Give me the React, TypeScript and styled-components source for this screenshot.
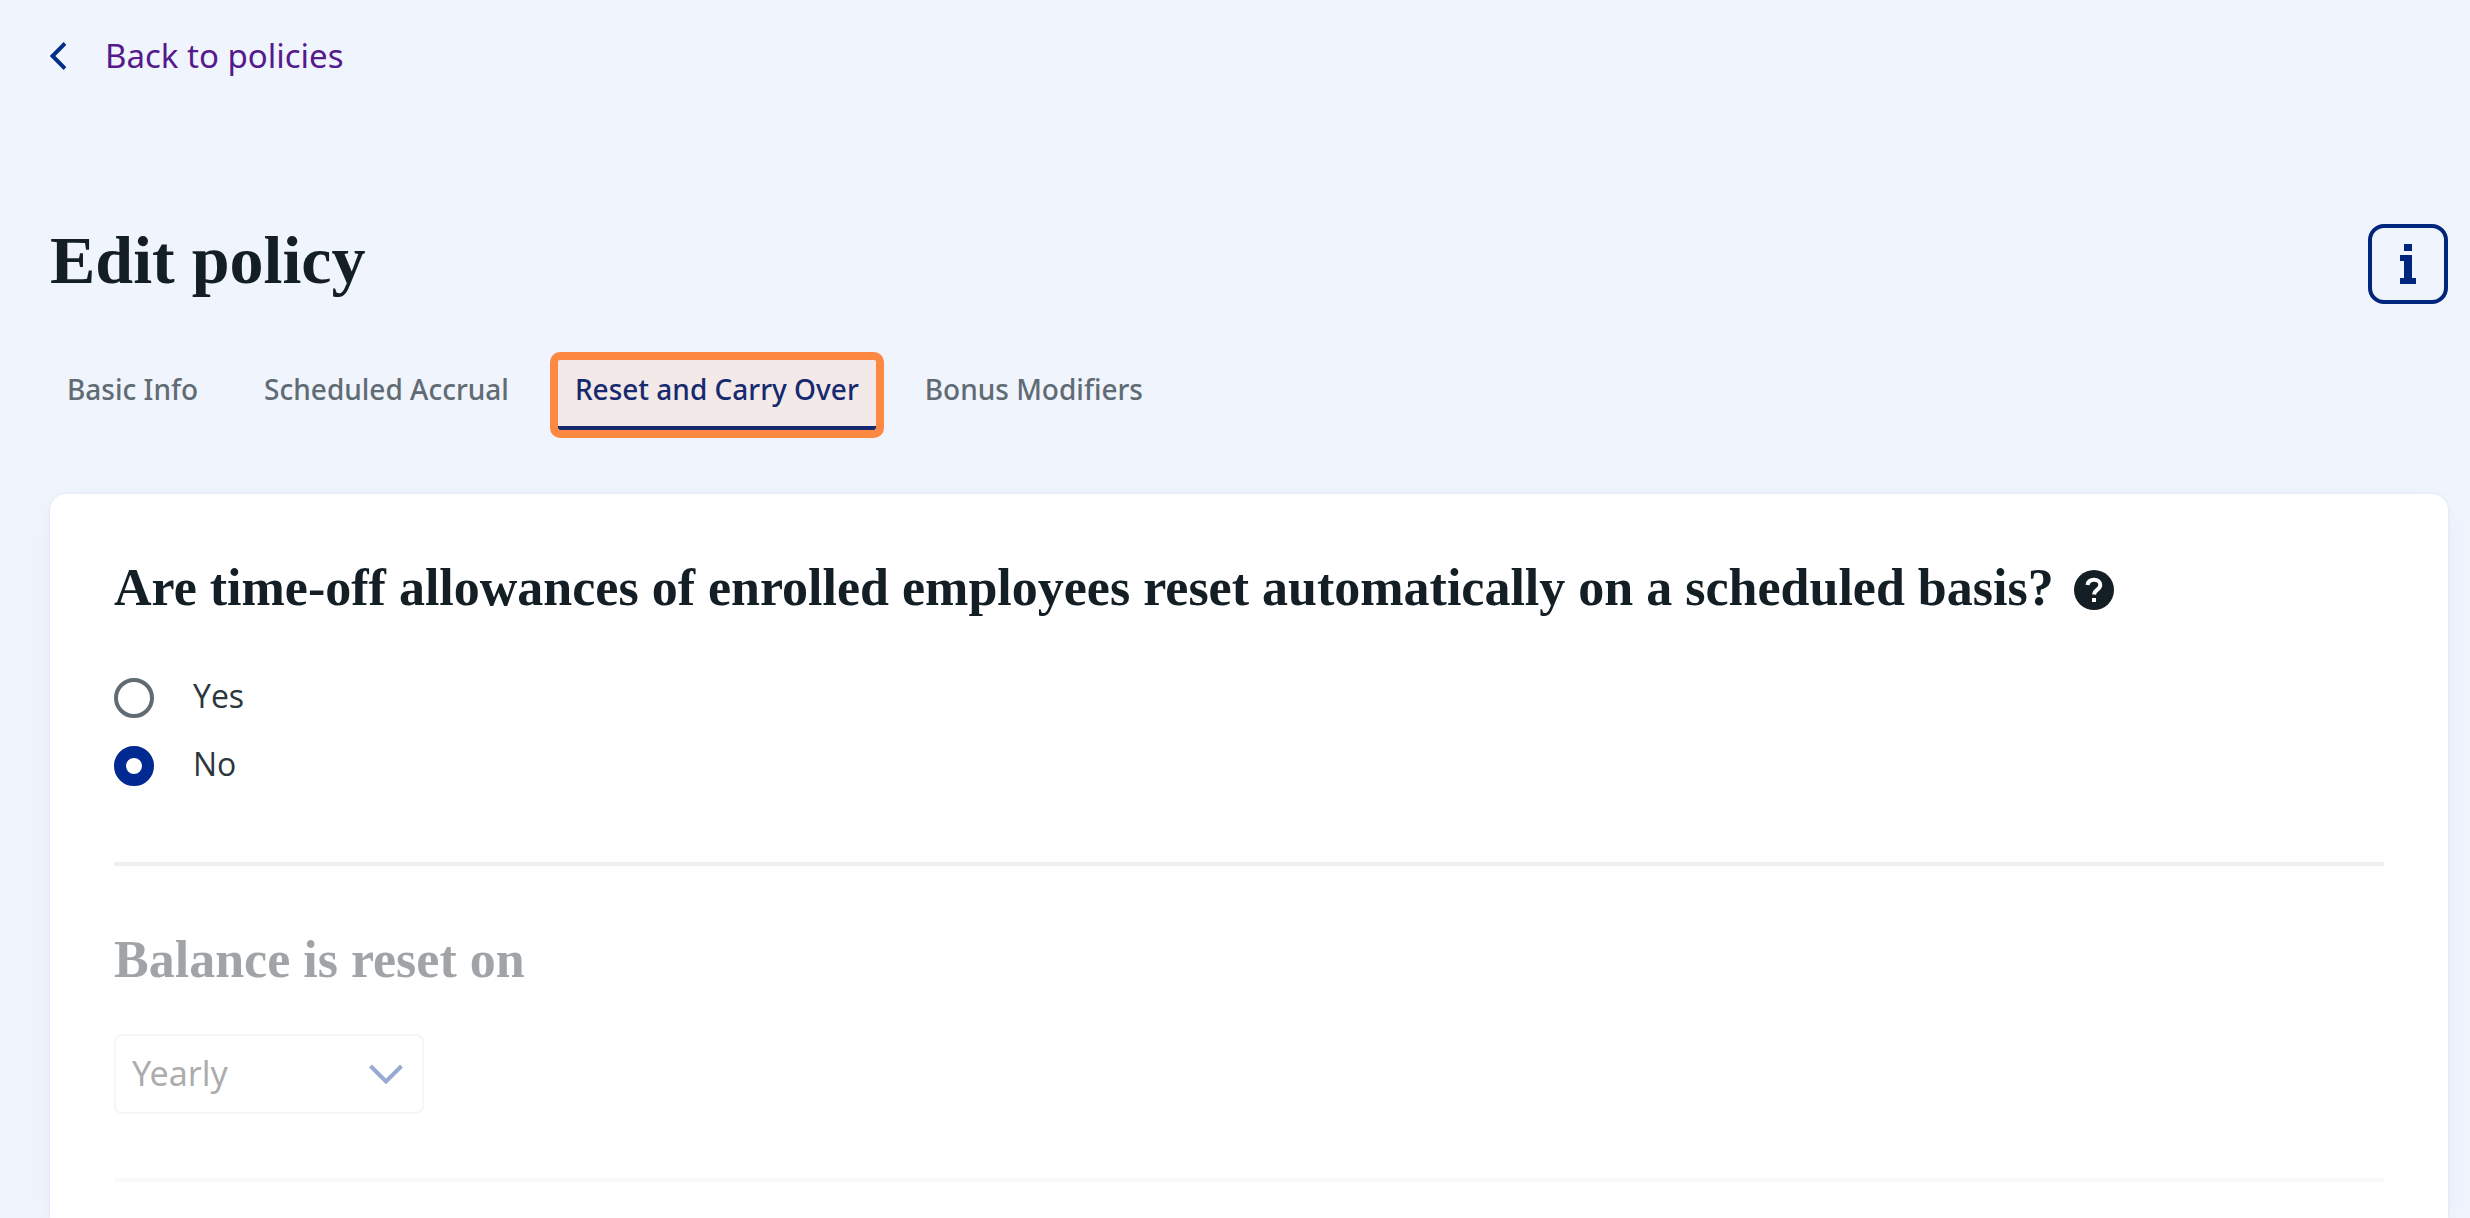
import React, { useState } from "react";
import styled, { createGlobalStyle } from "styled-components";

const color = {
  page: "#f0f4fc",
  ink: "#131e25",
  body: "#2c363d",
  muted: "#606b73",
  navy: "#00257c",
  tab: "#17296f",
  radio: "#002a91",
  visited: "#551a8b",
  highlight: "#fd8841",
  highlightFill: "#f2e9e8",
  rule: "#edeff2",
};

const sans = `"Open Sans", "Noto Sans", sans-serif`;
const serif = `"Source Serif Pro", "Liberation Serif", serif`;

const GlobalStyle = createGlobalStyle`
  *, *::before, *::after { box-sizing: border-box; }
  body {
    margin: 0;
    background: ${color.page};
    color: ${color.ink};
    font-family: ${sans};
  }
`;

const Page = styled.div`
  display: flex;
  flex-direction: column;
  min-height: 100vh;
  padding: 32px 22px 0 50px;
`;

const BackLink = styled.a`
  display: flex;
  align-items: center;
  align-self: flex-start;
  gap: 39px;
  height: 48px;
  color: ${color.visited};
  font-family: "Noto Sans", sans-serif;
  font-size: 33px;
  line-height: 48px;
  text-decoration: none;
`;

const Header = styled.header`
  display: flex;
  align-items: flex-start;
  justify-content: space-between;
  margin-top: 144px;
`;

const Title = styled.h1`
  margin: 0;
  font-family: ${serif};
  font-size: 68px;
  font-weight: 700;
  line-height: 72px;
`;

const InfoButton = styled.button`
  display: grid;
  place-items: center;
  width: 80px;
  height: 80px;
  padding: 0;
  border: 4px solid ${color.navy};
  border-radius: 16px;
  background: transparent;
  color: ${color.navy};
  cursor: pointer;
`;

const Tabs = styled.div`
  display: flex;
  gap: 32px;
  margin: 56px 0 64px;
`;

const Tab = styled.button<{ $active: boolean }>`
  height: 70px;
  padding: 0 17px 8px;
  border: 0;
  border-bottom: 4px solid ${(p) => (p.$active ? color.tab : "transparent")};
  border-radius: 2px;
  outline: ${(p) => (p.$active ? `8px solid ${color.highlight}` : "none")};
  background: ${(p) => (p.$active ? color.highlightFill : "transparent")};
  color: ${(p) => (p.$active ? color.tab : color.muted)};
  font-family: "Noto Sans", sans-serif;
  font-size: 28px;
  font-weight: 500;
  line-height: 40px;
  cursor: pointer;
`;

const Card = styled.main`
  flex: 1;
  padding: 64px 64px 36px;
  border-radius: 16px 16px 0 0;
  background: #fff;
  box-shadow: 0 0 3px rgba(40, 70, 160, 0.1), 0 8px 32px rgba(40, 70, 160, 0.03);
`;

const Section = styled.fieldset`
  min-width: 0;
  margin: 0;
  padding: 0 0 72px;
  border: 0;
  border-bottom: 4px solid ${color.rule};

  &:disabled {
    padding: 64px 0;
    border-color: #f9fafa;
  }
`;

const SectionHeading = styled.h2`
  display: flex;
  align-items: center;
  gap: 20px;
  margin: 0;
  font-family: ${serif};
  font-size: 52px;
  font-weight: 700;
  line-height: 60px;

  ${Section}:disabled & { opacity: 0.4; }
`;

const HelpButton = styled.button`
  display: flex;
  margin-top: 4px;
  padding: 0;
  border: 0;
  background: none;
  color: ${color.ink};
  cursor: pointer;
`;

const Options = styled.div`
  display: flex;
  flex-direction: column;
  gap: 20px;
  margin-top: 56px;
`;

const Option = styled.label`
  display: flex;
  align-items: center;
  gap: 39px;
  height: 48px;
  color: ${color.body};
  font-size: 32px;
  line-height: 44px;
`;

const OptionText = styled.span`
  padding-bottom: 4px;
`;

const Radio = styled.input`
  appearance: none;
  width: 40px;
  height: 40px;
  margin: 0;
  border: 4px solid ${color.muted};
  border-radius: 50%;
  background: #fff;

  &:checked { border: 12px solid ${color.radio}; }
`;

const SelectBox = styled.div`
  display: grid;
  align-items: center;
  width: 310px;
  margin-top: 44px;
  opacity: 0.4;

  > * { grid-area: 1 / 1; }
  > svg { justify-self: end; margin-right: 21px; pointer-events: none; }
`;

const Select = styled.select`
  appearance: none;
  width: 100%;
  height: 80px;
  padding: 0 64px 2px 16px;
  border: 2px solid #e8eaeb;
  border-radius: 8px;
  background: #fff;
  color: #333;
  font-family: "Noto Sans", sans-serif;
  font-size: 34px;
  opacity: 1;
`;

const ChevronLeft = () => (
  <svg width="16" height="28" viewBox="0 0 16 28" fill="none" aria-hidden="true">
    <path d="M15 1.5 2.5 14 15 26.5" stroke="#052f86" strokeWidth="4" />
  </svg>
);

const ChevronDown = () => (
  <svg width="34" height="20" viewBox="0 0 34 20" fill="none" aria-hidden="true">
    <path d="M1.5 2 17 17.5 32.5 2" stroke={color.radio} strokeWidth="4" />
  </svg>
);

const InfoGlyph = () => (
  <svg width="16" height="40" viewBox="0 0 16 40" fill="currentColor" aria-hidden="true">
    <path d="M4 0h8v7H4zM0 11h12v23h4v6H0v-6h4V17H0z" />
  </svg>
);

const HelpGlyph = () => (
  <svg width="40" height="40" viewBox="0 0 40 40" aria-hidden="true">
    <circle cx="20" cy="20" r="20" fill="currentColor" />
    <path
      d="M13.5 15c.6-3.6 3.2-5.2 6.5-5.2 3.8 0 6.3 2 6.3 5.200 0 4.600-5.800 4.600-6.300 9.500"
      fill="none"
      stroke="#fff"
      strokeWidth="4"
    />
    <path d="M18 28h4v4h-4z" fill="#fff" />
  </svg>
);

const tabNames = ["Basic Info", "Scheduled Accrual", "Reset and Carry Over", "Bonus Modifiers"];

export default function App() {
  const [tab, setTab] = useState("Reset and Carry Over");
  const [reset, setReset] = useState("No");

  return (
    <>
      <GlobalStyle />
      <Page>
        <BackLink href="#policies">
          <ChevronLeft />
          Back to policies
        </BackLink>
        <Header>
          <Title>Edit policy</Title>
          <InfoButton type="button" aria-label="Information">
            <InfoGlyph />
          </InfoButton>
        </Header>
        <Tabs role="tablist">
          {tabNames.map((name) => (
            <Tab
              key={name}
              type="button"
              role="tab"
              aria-selected={tab === name}
              $active={tab === name}
              onClick={() => setTab(name)}
            >
              {name}
            </Tab>
          ))}
        </Tabs>
        <Card>
          <Section aria-labelledby="reset-heading">
            <SectionHeading id="reset-heading">
              Are time-off allowances of enrolled employees reset automatically on a scheduled basis?
              <HelpButton type="button" aria-label="Help">
                <HelpGlyph />
              </HelpButton>
            </SectionHeading>
            <Options>
              {["Yes", "No"].map((value) => (
                <Option key={value}>
                  <Radio
                    type="radio"
                    name="reset"
                    value={value}
                    checked={reset === value}
                    onChange={() => setReset(value)}
                  />
                  <OptionText>{value}</OptionText>
                </Option>
              ))}
            </Options>
          </Section>
          <Section disabled={reset === "No"}>
            <SectionHeading id="frequency-heading">Balance is reset on</SectionHeading>
            <SelectBox>
              <Select aria-labelledby="frequency-heading" defaultValue="Yearly">
                <option>Yearly</option>
                <option>Monthly</option>
              </Select>
              <ChevronDown />
            </SelectBox>
          </Section>
        </Card>
      </Page>
    </>
  );
}
